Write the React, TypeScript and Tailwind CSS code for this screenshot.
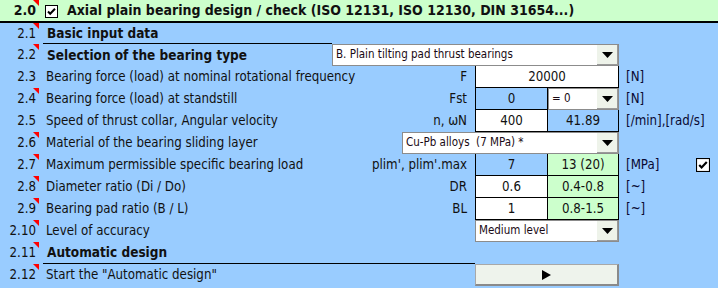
import React from "react";

const FONT = { fontFamily: '"DejaVu Sans", Tahoma, sans-serif', fontStretch: "condensed" } as React.CSSProperties;

function RedMark() {
  return (
    <svg className="absolute right-[1px] top-0" width="6" height="6" viewBox="0 0 6 6" aria-hidden>
      <polygon points="0,0 6,0 6,6" fill="#ff0000" />
    </svg>
  );
}

function Num({ n, mark, bold }: { n: string; mark?: boolean; bold?: boolean }) {
  return (
    <div className={`relative flex h-full w-[40px] shrink-0 items-center justify-end pr-[4px] ${bold ? "font-bold" : ""}`}>
      {n}
      {mark && <RedMark />}
    </div>
  );
}

function Check({ size = 13 }: { size?: number }) {
  return (
    <svg width={size} height={size} viewBox="0 0 13 13" aria-hidden>
      <rect x="0.5" y="0.5" width="12" height="12" fill="#fff" stroke="#000" />
      <path d="M3 6.5 L5.2 8.8 L10 3.8" fill="none" stroke="#000" strokeWidth="2" />
    </svg>
  );
}

function DropDown({ text, className }: { text: string; className: string }) {
  return (
    <div className={`flex h-[22px] shrink-0 items-center border border-[#8c8c8c] bg-white pl-[3px] text-[11.5px] text-[#1a0a14] ${className}`}>
      <span className="flex-1 truncate whitespace-pre">{text}</span>
      <div className="flex h-[20px] w-[21px] items-center justify-center border-b border-r border-[#9a9a9a] bg-[#eef3ea]">
        <svg width="11" height="6" viewBox="0 0 11 6" aria-hidden>
          <polygon points="0,0 11,0 5.5,6" fill="#000" />
        </svg>
      </div>
    </div>
  );
}

function Cell({ v, bg, w, first }: { v: string; bg: string; w: string; first?: boolean }) {
  return (
    <div className={`flex h-full items-center justify-center border-b border-r border-black ${first ? "border-l" : ""} ${bg} ${w}`}>
      {v}
    </div>
  );
}

function Row({ children }: { children: React.ReactNode }) {
  return <div className="flex h-[22px] items-center">{children}</div>;
}

function Label({ text, sym, w = "w-[435px]" }: { text: string; sym?: string; w?: string }) {
  return (
    <div className={`flex h-full shrink-0 items-center justify-between pl-[6px] pr-[8px] ${w}`}>
      <span className="whitespace-nowrap">{text}</span>
      {sym && <span className="whitespace-nowrap">{sym}</span>}
    </div>
  );
}

function Unit({ u }: { u: string }) {
  return <div className="pl-[7px] text-[#0a0a33]">{u}</div>;
}

export default function App() {
  return (
    <div
      className="h-[288px] w-[718px] overflow-hidden bg-[#99ccff] bg-[radial-gradient(#90c3f6_0.6px,transparent_0.7px)] bg-[length:4px_4px] text-[13.2px] text-[#111]"
      style={FONT}
    >
      {/* title bar */}
      <div className="flex h-[23px] items-center border-b-2 border-black bg-[#ccffcc] pb-[1px] text-[14px] font-bold">
        <Num n="2.0" mark bold />
        <div className="ml-[5px] flex items-center pt-[2px]">
          <Check />
        </div>
        <span className="ml-[9px] whitespace-nowrap">Axial plain bearing design / check (ISO 12131, ISO 12130, DIN 31654...)</span>
      </div>

      <div className="flex h-[21px] items-center">
        <Num n="2.1" mark />
        <div className="ml-[3px] flex h-full w-[289px] items-center border-b border-black pl-[4px] text-[13.5px] font-bold">
          Basic input data
        </div>
      </div>

      <Row>
        <Num n="2.2" mark />
        <div className="w-[292px] shrink-0 pl-[7px] text-[13.5px] font-bold">Selection of the bearing type</div>
        <DropDown text="B. Plain tilting pad thrust bearings" className="w-[287px]" />
      </Row>

      <Row>
        <Num n="2.3" />
        <Label text="Bearing force (load) at nominal rotational frequency" sym="F" />
        <Cell v="20000" bg="bg-white" w="w-[144px]" first />
        <Unit u="[N]" />
      </Row>

      <Row>
        <Num n="2.4" mark />
        <Label text="Bearing force (load) at standstill" sym="Fst" />
        <Cell v="0" bg="" w="w-[73px]" first />
        <DropDown text="= 0" className="w-[71px]" />
        <Unit u="[N]" />
      </Row>

      <Row>
        <Num n="2.5" />
        <Label text="Speed of thrust collar, Angular velocity" sym="n, ωN" />
        <Cell v="400" bg="bg-white" w="w-[73px]" first />
        <Cell v="41.89" bg="" w="w-[71px]" />
        <Unit u="[/min],[rad/s]" />
      </Row>

      <Row>
        <Num n="2.6" mark />
        <Label text="Material of the bearing sliding layer" w="w-[362px]" />
        <DropDown text="Cu-Pb alloys  (7 MPa) *" className="w-[217px]" />
      </Row>

      <Row>
        <Num n="2.7" mark />
        <Label text="Maximum permissible specific bearing load" sym="plim', plim'.max" />
        <Cell v="7" bg="" w="w-[73px]" first />
        <Cell v="13 (20)" bg="bg-[#ccffcc]" w="w-[71px]" />
        <Unit u="[MPa]" />
        <div className="ml-auto mr-[8px] flex items-center">
          <Check size={14} />
        </div>
      </Row>

      <Row>
        <Num n="2.8" mark />
        <Label text="Diameter ratio (Di / Do)" sym="DR" />
        <Cell v="0.6" bg="bg-white" w="w-[73px]" first />
        <Cell v="0.4-0.8" bg="bg-[#ccffcc]" w="w-[71px]" />
        <Unit u="[~]" />
      </Row>

      <Row>
        <Num n="2.9" mark />
        <Label text="Bearing pad ratio (B / L)" sym="BL" />
        <Cell v="1" bg="bg-white" w="w-[73px]" first />
        <Cell v="0.8-1.5" bg="bg-[#ccffcc]" w="w-[71px]" />
        <Unit u="[~]" />
      </Row>

      <Row>
        <Num n="2.10" mark />
        <Label text="Level of accuracy" />
        <DropDown text="Medium level" className="w-[144px]" />
      </Row>

      <Row>
        <Num n="2.11" mark />
        <div className="ml-[3px] flex h-full w-[432px] items-center border-b border-black pl-[4px] text-[13.5px] font-bold">
          Automatic design
        </div>
      </Row>

      <Row>
        <Num n="2.12" mark />
        <Label text={'Start the "Automatic design"'} />
        <button className="flex h-[22px] w-[144px] items-center justify-center border border-b-2 border-r-2 border-[#a8a8a8] border-b-[#8a8a8a] border-r-[#8a8a8a] bg-[#eef3ec]">
          <svg width="9" height="10" viewBox="0 0 9 10" aria-hidden>
            <polygon points="0,0 9,5 0,10" fill="#000" />
          </svg>
        </button>
      </Row>
    </div>
  );
}
